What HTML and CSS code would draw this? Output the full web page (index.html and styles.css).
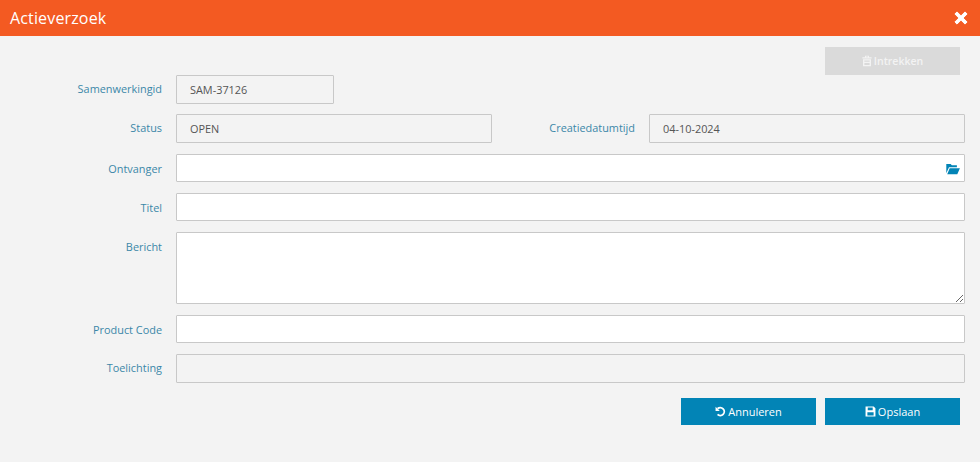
FILE: index.html
```html
<!DOCTYPE html>
<html lang="nl">
<head>
<meta charset="utf-8">
<title>Actieverzoek</title>
<link rel="stylesheet" href="styles.css">
</head>
<body>
<header class="titlebar">
  <h1 class="title">Actieverzoek</h1>
  <button class="close" type="button" aria-label="Sluiten">
    <svg viewBox="0 0 14 14" width="14" height="14"><path d="M3 .9 7 4.900 11 .9 13.100 3 9.100 7 13.100 11 11 13.100 7 9.100 3 13.100.9 11 4.900 7 .9 3Z" fill="#fff" stroke="#fff" stroke-width="1" stroke-linejoin="round"/></svg>
  </button>
</header>
<main class="content">
  <div class="topbar">
    <button class="btn btn-disabled" type="button">
      <svg viewBox="0 0 10 12" width="10" height="12"><path d="M3 2.200V.8h4v1.400h2.600v1.200H.4V2.200ZM4 1.500v.7h2v-.7ZM1 4.200h8V11.200H1ZM2.400 5.400v1.400h5.200V5.400ZM2.400 8v2h5.200V8Z" fill="#f3f3f3" fill-rule="evenodd"/></svg>
      Intrekken
    </button>
  </div>
  <form class="form">
    <div class="row row-1">
      <label class="label">Samenwerkingid</label>
      <div class="field field-ro field-short">SAM-37126</div>
    </div>
    <div class="row row-2">
      <label class="label">Status</label>
      <div class="field field-ro field-half">OPEN</div>
      <label class="label label-mid">Creatiedatumtijd</label>
      <div class="field field-ro field-half">04-10-2024</div>
    </div>
    <div class="row row-3">
      <label class="label label-edit">Ontvanger</label>
      <div class="field field-edit field-grow">
        <svg class="folder" viewBox="0 0 14 12" width="14" height="12"><path d="M.3 10.300V1h4.300l1.300 1.300h5V4.300H3L.3 10.300Z M1.200 11.300 3.700 5.300H13.900L11.300 11.300Z" fill="#0284b6"/></svg>
      </div>
    </div>
    <div class="row row-4">
      <label class="label label-edit">Titel</label>
      <input class="field field-edit field-grow" type="text">
    </div>
    <div class="row row-5">
      <label class="label label-edit">Bericht</label>
      <textarea class="field field-edit field-grow area"></textarea>
    </div>
    <div class="row row-6">
      <label class="label label-edit">Product Code</label>
      <input class="field field-edit field-grow" type="text">
    </div>
    <div class="row row-7">
      <label class="label">Toelichting</label>
      <div class="field field-ro field-grow field-tall"></div>
    </div>
  </form>
  <div class="actions">
    <button class="btn btn-primary" type="button">
      <svg viewBox="0 0 12 12" width="11" height="11"><path d="M2.800 3A4.300 4.300 0 1 1 2.800 9.200" fill="none" stroke="#fff" stroke-width="2"/><path d="M.6.8V5.400H5.200Z" fill="#fff"/></svg>
      Annuleren
    </button>
    <button class="btn btn-primary" type="button">
      <svg viewBox="0 0 12 12" width="11" height="11"><path d="M.6.6H9.500L11.400 2.500V11.400H.6ZM3 1.700V4.700H8.400V1.700ZM2.600 6.700V10.300H9.400V6.700Z" fill="#fff" fill-rule="evenodd"/></svg>
      Opslaan
    </button>
  </div>
</main>
</body>
</html>
```
FILE: styles.css
```css
* {
  box-sizing: border-box;
}

html,
body {
  margin: 0;
  height: 100%;
}

body {
  background: #f3f3f3;
  font-family: "Open Sans", "Liberation Sans", sans-serif;
  font-size: 10.9px;
  color: #555;
  overflow: hidden;
}

.titlebar {
  display: flex;
  align-items: center;
  justify-content: space-between;
  height: 36px;
  padding: 0 12px 0 10px;
  background: #f35a22;
}

.title {
  margin: 0;
  font-size: 16px;
  font-weight: 400;
  color: #fff;
  letter-spacing: 0.15px;
}

.close {
  display: flex;
  padding: 0;
  border: 0;
  background: none;
}

.content {
  padding: 11px 15px 0 0;
}

.topbar {
  display: flex;
  justify-content: flex-end;
  padding-right: 5px;
}

.btn {
  display: flex;
  align-items: center;
  justify-content: center;
  gap: 2px;
  width: 135px;
  border: 0;
  font-family: inherit;
  font-size: 11px;
  font-weight: 400;
}

.btn-disabled {
  height: 28px;
  background: #dadada;
  color: #f3f3f3;
  font-weight: 600;
  font-size: 10.5px;
}

.btn-primary {
  height: 27px;
  background: #0284b6;
  color: #fff;
}

.form {
  display: flex;
  flex-direction: column;
}

.row {
  display: flex;
  align-items: flex-start;
}

.row-2 {
  margin-top: 10px;
}

.row-3,
.row-4,
.row-5,
.row-6,
.row-7 {
  margin-top: 11px;
}

.label {
  flex: none;
  width: 162px;
  margin-right: 14px;
  padding-top: 6px;
  line-height: 16px;
  text-align: right;
  color: #3b87a8;
}

.label-edit {
  padding-top: 7px;
}

.label-mid {
  width: 143px;
  margin-right: 14px;
}

.field {
  display: block;
  height: 28px;
  padding: 0 13px;
  border: 1px solid #c8c8c8;
  border-radius: 1px;
  font-family: inherit;
  font-size: 10.9px;
  line-height: 26px;
  color: #555;
}

.row-1 .field,
.row-2 .field {
  height: 29px;
  line-height: 27px;
}

.field-ro {
  background: #f3f3f3;
}

.field-edit {
  position: relative;
  background: #fff;
  outline: none;
}

.field-short {
  width: 158px;
}

.field-half {
  width: 316px;
}

.field-grow {
  flex: 1;
  min-width: 0;
}

.field-tall {
  height: 29px;
}

.area {
  height: 72px;
  margin: 0;
}

.folder {
  position: absolute;
  top: 8px;
  right: 4px;
}

.actions {
  display: flex;
  justify-content: flex-end;
  gap: 9px;
  margin-top: 15px;
  padding-right: 5px;
}
```
